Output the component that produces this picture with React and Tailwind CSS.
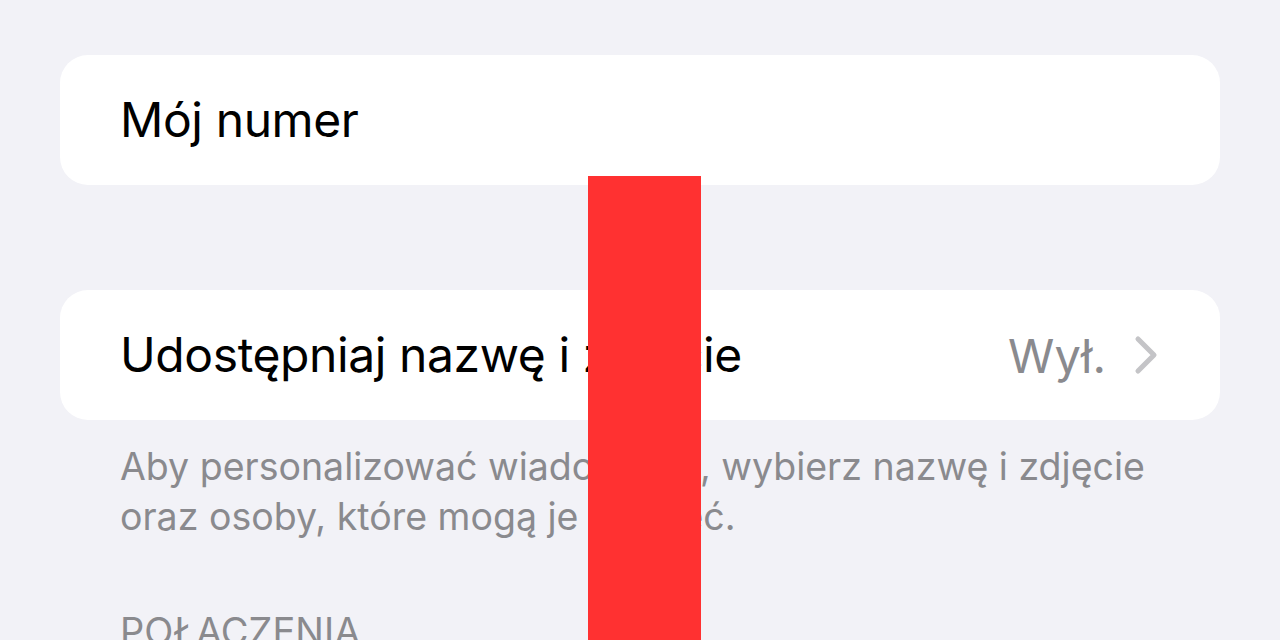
import { ChevronRight } from "lucide-react";

const Row = ({ label, value }) => (
  <div className="flex h-[130px] items-center rounded-[28px] bg-white pl-[60px] pr-[42px]">
    <span className="flex-1 whitespace-nowrap text-[48px] leading-none tracking-[-0.4px] text-black">{label}</span>
    {value && (
      <div className="flex items-center gap-[8px]">
        <span className="text-[47px] leading-none text-[#8a8a8e]">{value}</span>
        <ChevronRight className="h-[64px] w-[64px] text-[#c4c4c7]" strokeWidth={1.9} />
      </div>
    )}
  </div>
);

export default function App() {
  return (
    <div
      className="relative h-[640px] w-[1280px] overflow-hidden bg-[#f2f2f7] px-[60px] pt-[55px]"
      style={{ fontFamily: "Inter, 'Noto Sans', sans-serif" }}
    >
      <Row label="Mój numer" />

      <div className="mt-[105px]">
        <Row label="Udostępniaj nazwę i zdjęcie" value="Wył." />
      </div>

      <p className="mt-[22px] whitespace-nowrap px-[60px] text-[37.5px] leading-[50px] text-[#8a8a8e]">
        Aby personalizować wiadomości, wybierz nazwę i zdjęcie
        <br />
        oraz osoby, które mogą je widzieć.
      </p>

      <p className="mt-[70px] px-[60px] text-[38px] leading-none text-[#8a8a8e]">POŁĄCZENIA</p>

      <div className="absolute left-[588px] top-[176px] h-[464px] w-[113px] bg-[#ff3131]" />
    </div>
  );
}
